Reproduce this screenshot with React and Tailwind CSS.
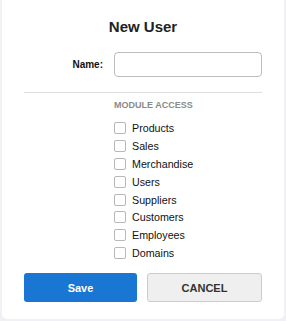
import React from "react";

const modules = ["Products", "Sales", "Merchandise", "Users", "Suppliers", "Customers", "Employees", "Domains"];

export default function App() {
  return (
    <div className="w-[286px] h-[321px] bg-[#f0f0f5] px-[2px] pb-[2px]" style={{ fontFamily: '"Liberation Sans", Arial, sans-serif' }}>
      <div className="h-full bg-white rounded-b-[5px] px-[22px] flex flex-col">
        <h1 className="pt-[18px] text-center text-[15px] leading-[17px] font-bold text-[#222]">New User</h1>
        <div className="mt-[17px] flex items-center gap-[11px]">
          <label className="w-[79px] shrink-0 text-right text-[10px] font-bold text-[#111]">Name:</label>
          <input type="text" className="flex-1 min-w-0 w-0 h-[25px] rounded-[4px] border border-[#bdbdbd] bg-white outline-none px-2 text-[11px]" />
        </div>
        <div className="mt-[15px] h-px bg-[#dedede]" />
        <div className="pl-[90px] mt-[7px]">
          <div className="text-[9px] leading-[11px] font-bold text-[#8a8a8a] uppercase">Module Access</div>
          <div className="mt-[8.5px] flex flex-col">
            {modules.map((m) => (
              <label key={m} className="h-[17.8px] flex items-center gap-[6px] text-[10.7px] text-[#111]">
                <span className="w-[12px] h-[12px] rounded-[2px] border border-[#b8b8b8] bg-white" />
                {m}
              </label>
            ))}
          </div>
        </div>
        <div className="mt-[11.5px] flex gap-[10px]">
          <button className="flex-1 h-[29px] rounded-[3px] bg-[#1976d2] text-white text-[11px] font-bold">Save</button>
          <button className="flex-1 h-[29px] rounded-[3px] bg-[#efefef] border border-[#cccccc] text-[#333] text-[11px] font-bold">CANCEL</button>
        </div>
      </div>
    </div>
  );
}
